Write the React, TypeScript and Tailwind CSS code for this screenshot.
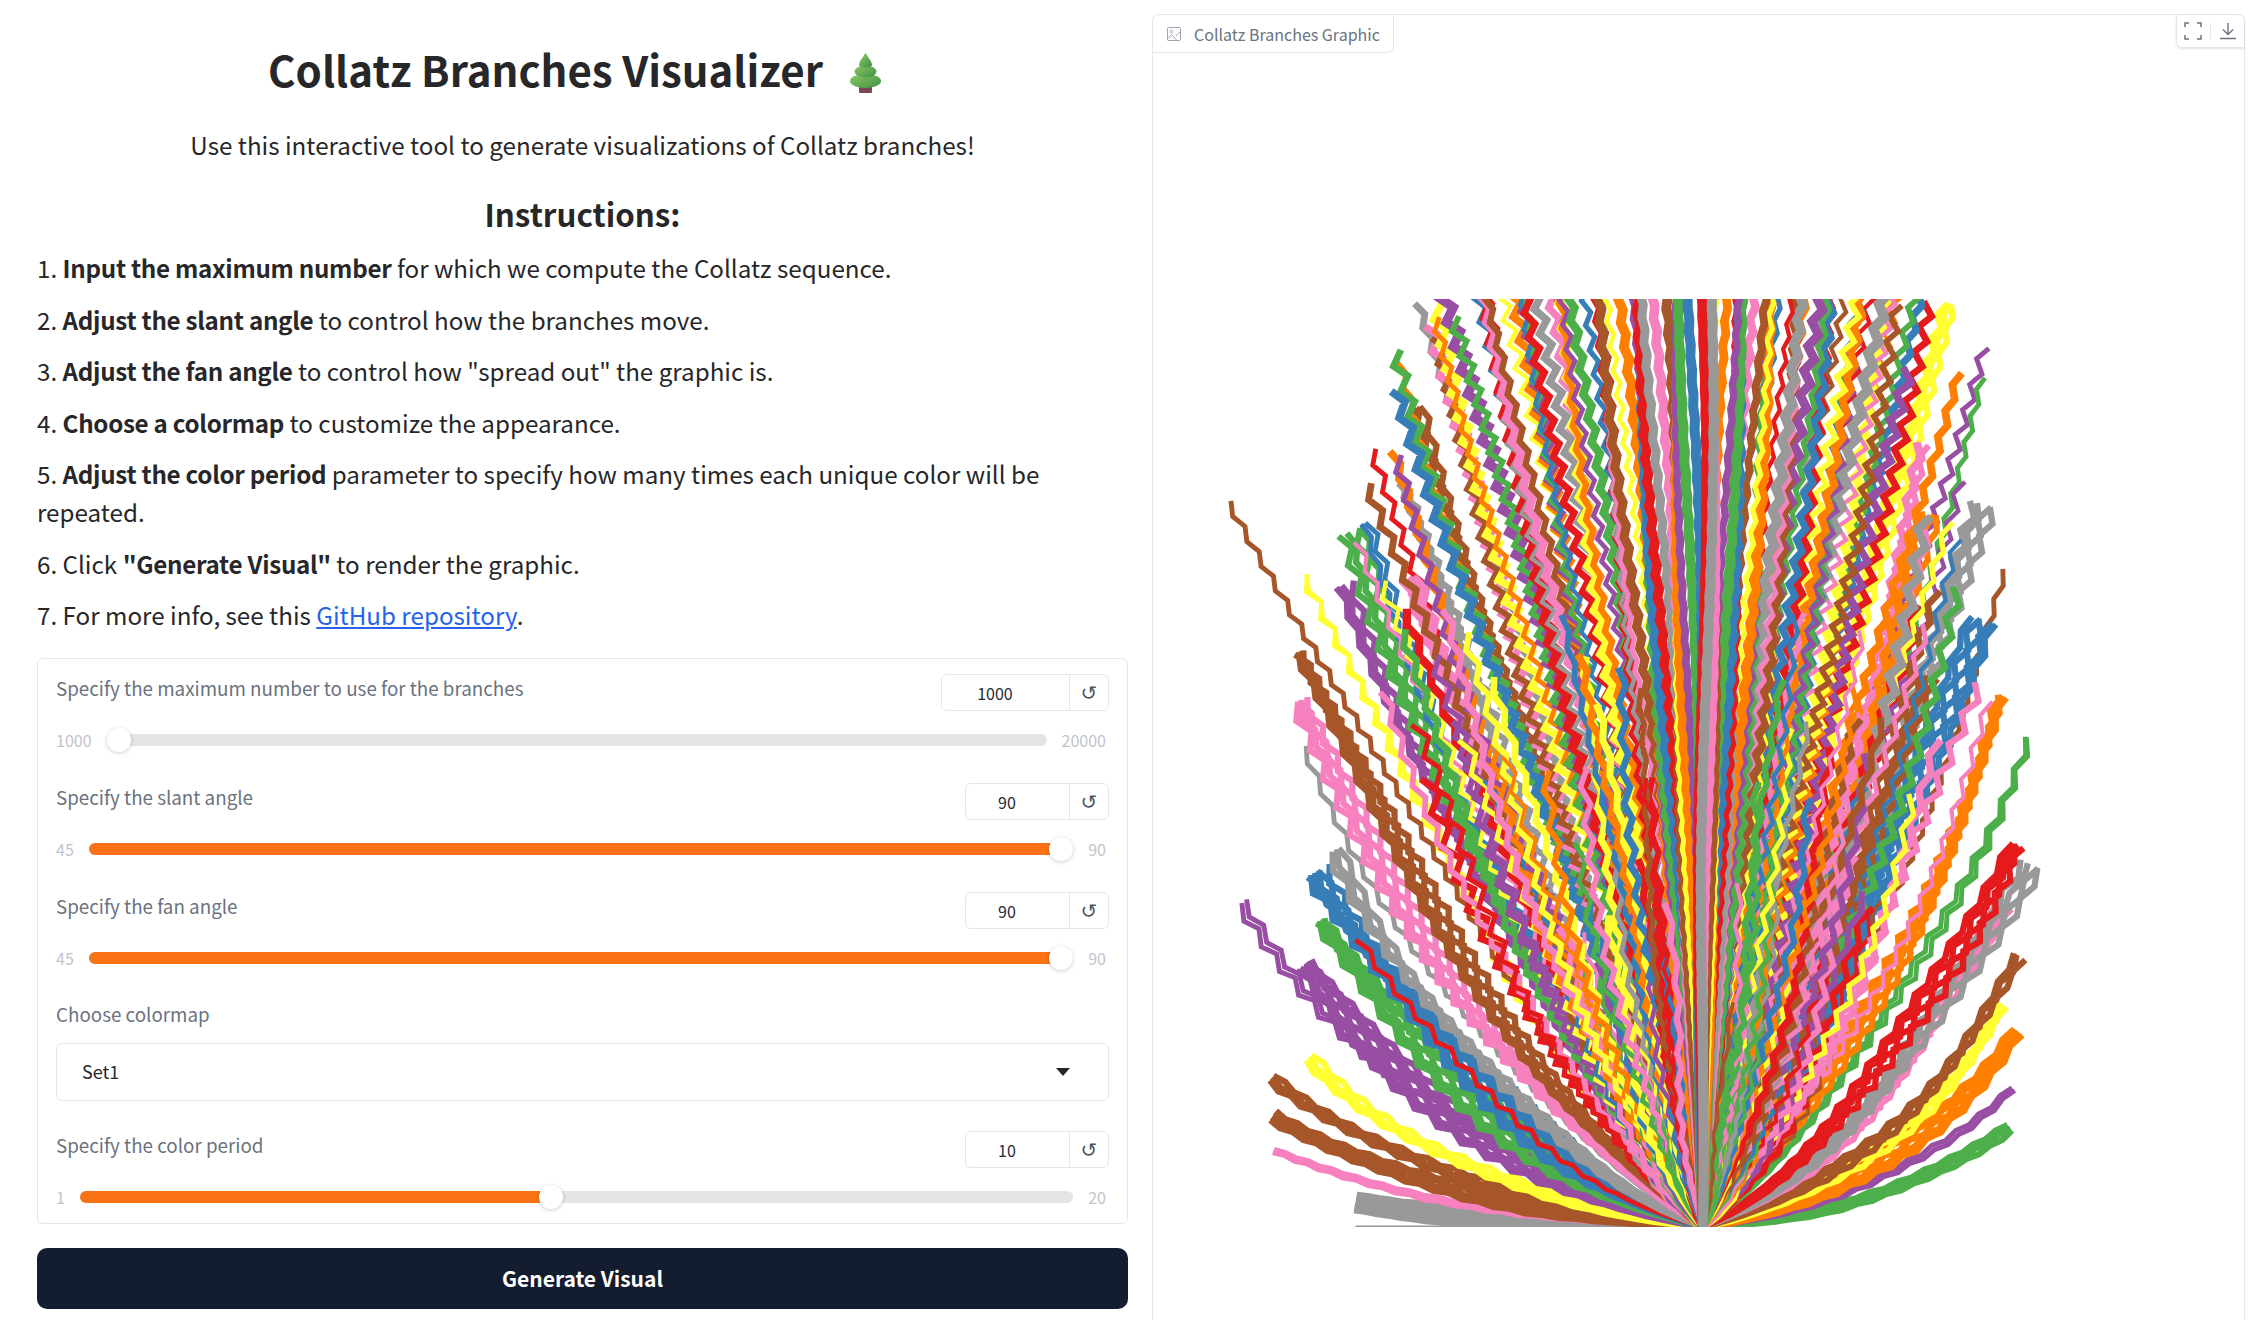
import React, { useMemo } from 'react';

const SET1 = ['#e41a1c', '#377eb8', '#4daf4a', '#984ea3', '#ff7f00', '#ffff33', '#a65628', '#f781bf', '#999999'];
const [RED, BLUE, GREEN, PURPLE, ORANGE, YELLOW, BROWN, PINK, GREY] = SET1;

// Outer branches read off the picture: colour, tip x, tip y, parallel lines
const OUTER: [string, number, number, number][] = [
  [GREY, 942, 853, 1], [GREY, 942, 836, 5], [PINK, 885, 800, 2], [BROWN, 885, 775, 4], [BROWN, 885, 748, 3],
  [YELLOW, 910, 735, 3], [PURPLE, 860, 630, 2], [PURPLE, 905, 672, 6], [GREEN, 918, 640, 6], [BLUE, 917, 605, 7],
  [RED, 948, 650, 1], [GREY, 930, 590, 3], [GREY, 905, 520, 1], [PINK, 898, 490, 4], [BROWN, 900, 455, 4],
  [YELLOW, 907, 400, 2], [BROWN, 858, 347, 1], [PURPLE, 938, 405, 3], [GREEN, 938, 370, 4], [BLUE, 945, 365, 2],
  [RED, 948, 315, 1], [GREY, 975, 335, 3], [PINK, 985, 400, 5], [BROWN, 990, 282, 3], [ORANGE, 975, 250, 1],
  [GREEN, 1397, 783, 3], [PURPLE, 1398, 755, 2], [ORANGE, 1403, 717, 5], [YELLOW, 1395, 700, 3], [BROWN, 1408, 667, 3],
  [PINK, 1395, 630, 3], [GREY, 1410, 600, 4], [RED, 1397, 585, 4], [GREEN, 1408, 512, 2], [ORANGE, 1395, 485, 4],
  [BROWN, 1400, 398, 1], [GREY, 1382, 352, 4], [BLUE, 1375, 430, 5], [YELLOW, 1350, 210, 3], [PURPLE, 1375, 240, 1],
  [GREEN, 1378, 262, 1], [PINK, 1342, 310, 3], [ORANGE, 1345, 358, 4], [BROWN, 1340, 470, 3], [RED, 1330, 420, 2],
];

const rand = (s: number) => {
  const v = Math.sin(s * 127.1 + 311.7) * 43758.5453;
  return v - Math.floor(v);
};

function branch(ex: number, ey: number, seed: number, offset: number, flip: number, ampScale: number) {
  const dx = ex - 1184;
  const h = 853 - ey;
  const reach = Math.min(1, h / 645);
  const cx = 1184 + dx * (0.68 - 0.28 * reach);
  const cy = 853 - h * (0.12 + 0.24 * reach);
  const len = Math.hypot(dx, h);
  const step = 7 + (1 - reach) * 4;
  const n = Math.max(6, Math.round(len / step));
  const low = Math.min(1, reach * 2.5);
  const pts: string[] = [];
  for (let i = 0; i <= n; i++) {
    const t = i / n;
    const u = 1 - t;
    const x = u * u * 1184 + 2 * u * t * cx + t * t * ex;
    const y = u * u * 853 + 2 * u * t * cy + t * t * ey;
    const tx = 2 * u * (cx - 1184) + 2 * t * (ex - cx);
    const ty = 2 * u * (cy - 853) + 2 * t * (ey - cy);
    const tl = Math.hypot(tx, ty) || 1;
    const amp = Math.min(1, Math.max(0, (t - 0.16) * 3)) * (1.8 + rand(seed) * 1.6) * ampScale * low;
    const zig = (i + flip) % 2 ? amp : -amp;
    const drift = Math.sin(t * 7 + seed) * 6 * t * low;
    const side = zig + drift + offset * Math.min(1, t * 3);
    pts.push(`${(x - (ty / tl) * side).toFixed(1)},${(y + (tx / tl) * side).toFixed(1)}`);
  }
  return pts.join(' ');
}

function CollatzChart() {
  const lines = useMemo(() => {
    const out: { color: string; points: string; width: number }[] = [];
    OUTER.forEach(([color, ex, ey, count], k) => {
      for (let j = 0; j < count; j++) {
        const width = ey >= 850 ? 2 : 3.4 + (count > 2 ? 1 : 0);
        out.push({ color, points: branch(ex, ey, k + j * 0.37, (j - (count - 1) / 2) * 2.8, j % 3 === 2 ? 1 : 0, 1), width });
      }
    });
    // inner fan: colours cycle by angle going out from the centre
    const inner: { color: string; points: string; width: number; tip: number }[] = [];
    const count = 52;
    for (let i = count; i >= 0; i--) {
      const left = SET1[i % 9];
      const right = SET1[8 - (i % 9)];
      const u = i / count;
      const w = i < 3 ? 7 : 2.8 + rand(i) * 4.2;
      const amp = Math.min(1.2, 0.1 + u * 1.9);
      const ly = u > 0.86 ? 230 + rand(i + 9) * 200 : 170 + rand(i + 3) * (u > 0.7 ? 90 : 10);
      const lx = 1181 - u * 232;
      inner.push({ color: left, points: branch(lx, ly, i + 40, 0, 0, amp), width: w, tip: u });
      const ry = u > 0.86 ? 230 + rand(i + 19) * 200 : 170 + rand(i + 13) * (u > 0.7 ? 90 : 10);
      const rx = 1187 + u * 180;
      inner.push({ color: right, points: branch(rx, ry, i + 90, 0, 0, amp), width: w, tip: u });
    }
    // shorter branches that end inside the fan and break up the stripes
    for (let i = 0; i < 110; i++) {
      const side = i % 2 ? 1 : -1;
      const u = 0.16 + rand(i + 200) * 0.84;
      const ey = 420 + rand(i + 300) * 350;
      const h = 853 - ey;
      const ex = 1184 + side * u * h * (side < 0 ? 0.62 : 0.56);
      inner.push({
        color: SET1[Math.floor(rand(i + 400) * 9)],
        points: branch(ex, ey, i + 500, 0, i % 2, 0.5 + u),
        width: 2.6 + rand(i + 600) * 2.6,
        tip: u * 0.9,
      });
    }
    inner.sort((a, b) => b.tip - a.tip);
    return [...out, ...inner];
  }, []);

  return (
    <svg viewBox="801 208 760 645" className="block w-full h-[928px]" preserveAspectRatio="none">
      {lines.map((l, i) => (
        <polyline key={i} points={l.points} fill="none" stroke={l.color} strokeWidth={l.width} strokeLinejoin="miter" />
      ))}
    </svg>
  );
}

function TreeIcon() {
  return (
    <svg viewBox="0 0 31 40" className="w-[31px] h-10 ml-[27px] mr-4 mt-[17px]">
      <defs>
        <linearGradient id="leaf" x1="0" y1="0" x2="1" y2="1">
          <stop offset="0" stopColor="#8cc968" />
          <stop offset="1" stopColor="#3f9142" />
        </linearGradient>
      </defs>
      <rect x="9" y="33" width="13" height="7" rx="1" fill="#7b4650" />
      <ellipse cx="15.5" cy="28" rx="15.5" ry="7" fill="url(#leaf)" />
      <ellipse cx="15.5" cy="18.5" rx="11" ry="6" fill="url(#leaf)" />
      <path d="M15.5 0 C18 4 22 9 22 11.5 C22 14 19 14.5 15.5 14.5 C12 14.5 9 14 9 11.5 C9 9 13 4 15.5 0 Z" fill="url(#leaf)" />
    </svg>
  );
}

function NumberBox({ value, width }: { value: string; width: string }) {
  return (
    <div className={`flex h-[37px] rounded-[6px] border border-[#e5e7eb] ${width}`}>
      <div className="flex-1 flex items-center justify-center pr-[21px] text-[16px] text-[#1f2937]">{value}</div>
      <div className="w-[39px] flex items-center justify-center border-l border-[#e5e7eb] text-[20px] text-[#4b5563] font-['DejaVu_Sans',sans-serif]">↺</div>
    </div>
  );
}

function SliderBlock({ label, value, min, max, pct, boxWidth }: { label: string; value: string; min: string; max: string; pct: number; boxWidth: string }) {
  const at = `calc(12px + (100% - 24px) * ${pct / 100})`;
  return (
    <div>
      <div className="flex justify-between h-[37px]">
        <span className="text-[18.8px] leading-[28px] text-[#6b7280]">{label}</span>
        <NumberBox value={value} width={boxWidth} />
      </div>
      <div className="flex items-center gap-[15px] h-6 mt-[17px] pr-[3px] text-[16px] text-[#c0c4cc]">
        <span>{min}</span>
        <div className="relative flex-1 h-3 rounded-full bg-[#e4e4e7]">
          <div className="h-full rounded-full bg-[#f97316]" style={{ width: pct ? at : 0 }} />
          <div className="absolute top-[-6px] w-6 h-6 -ml-3 rounded-full bg-white shadow-[0_1px_4px_rgba(0,0,0,0.2)]" style={{ left: at }} />
        </div>
        <span>{max}</span>
      </div>
    </div>
  );
}

const Bold = ({ children }: { children: React.ReactNode }) => <b className="font-semibold tracking-[-0.012em]">{children}</b>;

const App: React.FC = () => {
  return (
    <div className="w-[2255px] h-[1320px] overflow-hidden bg-white flex font-['Noto_Sans_CJK_SC',sans-serif] text-[#27272a]">
      <div className="w-[1091px] ml-[37px] shrink-0">
        <div className="flex justify-center items-start mt-[36px] h-[66px]">
          <h1 className="text-[42px] leading-[66px] font-semibold">Collatz Branches Visualizer</h1>
          <TreeIcon />
        </div>
        <p className="text-center text-[24.2px] leading-[38px] mt-[24px]">Use this interactive tool to generate visualizations of Collatz branches!</p>
        <h2 className="text-center text-[31.3px] leading-[48px] font-semibold mt-[26px]">Instructions:</h2>
        <div className="text-[24.2px] leading-[38px] mt-[11px] flex flex-col gap-[13.5px]">
          <p>1. <Bold>Input the maximum number</Bold> for which we compute the Collatz sequence.</p>
          <p>2. <Bold>Adjust the slant angle</Bold> to control how the branches move.</p>
          <p>3. <Bold>Adjust the fan angle</Bold> to control how "spread out" the graphic is.</p>
          <p>4. <Bold>Choose a colormap</Bold> to customize the appearance.</p>
          <p>5. <Bold>Adjust the color period</Bold> parameter to specify how many times each unique color will be repeated.</p>
          <p>6. Click <Bold>"Generate Visual"</Bold> to render the graphic.</p>
          <p>7. For more info, see this <a className="text-[#2563eb] underline">GitHub repository</a>.</p>
        </div>

        <div className="mt-[24px] h-[566px] rounded-[6px] border border-[#e5e7eb] px-[18px] pt-[15px] flex flex-col">
          <SliderBlock label="Specify the maximum number to use for the branches" value="1000" min="1000" max="20000" pct={0} boxWidth="w-[168px]" />
          <div className="mt-[31px]">
            <SliderBlock label="Specify the slant angle" value="90" min="45" max="90" pct={100} boxWidth="w-[144px]" />
          </div>
          <div className="mt-[31px]">
            <SliderBlock label="Specify the fan angle" value="90" min="45" max="90" pct={100} boxWidth="w-[144px]" />
          </div>
          <div className="mt-[32px] text-[18.8px] leading-6 text-[#6b7280]">Choose colormap</div>
          <div className="mt-[17px] h-[58px] rounded-[6px] border border-[#e5e7eb] flex items-center justify-between pl-[25px] pr-[38px] text-[18px]">
            <span className="-mt-[2px]">Set1</span>
            <svg viewBox="0 0 14 8" className="w-[14px] h-2"><path d="M0 0h14L7 8z" fill="#27272a" /></svg>
          </div>
          <div className="mt-[30px]">
            <SliderBlock label="Specify the color period" value="10" min="1" max="20" pct={47.4} boxWidth="w-[144px]" />
          </div>
        </div>

        <button className="mt-[24px] w-full h-[61px] rounded-[10px] bg-[#141c2f] text-white text-[21px] font-semibold">Generate Visual</button>
      </div>

      <div className="relative ml-[24px] mt-[14px] w-[1093px] h-[1400px] shrink-0 rounded-[6px] border border-[#e5e7eb] pt-[284px]">
        <div className="absolute left-0 top-0 h-[38px] w-[241px] flex items-center gap-[13px] pl-[14px] rounded-br-[6px] rounded-tl-[6px] border-r border-b border-[#e5e7eb] text-[16px] text-[#6b7280]">
          <svg viewBox="0 0 14 14" className="w-[14px] h-[14px]" fill="none" stroke="#9ca3af" strokeWidth="1">
            <rect x="0.5" y="0.5" width="13" height="13" rx="1" />
            <circle cx="4.5" cy="4.5" r="1.2" />
            <path d="M1 11.5l3.5-4 5.5 6M9 9l4-4" />
          </svg>
          Collatz Branches Graphic
        </div>
        <div className="absolute right-0 top-0 h-[33px] w-[68px] flex items-center justify-center gap-2 rounded-bl-[6px] rounded-tr-[6px] border-l border-b border-[#e5e7eb] shadow-sm">
          <svg viewBox="0 0 18 18" className="w-[18px] h-[18px]" fill="none" stroke="#6b7280" strokeWidth="1.5">
            <path d="M1 5V1h4M13 1h4v4M17 13v4h-4M5 17H1v-4" />
          </svg>
          <span className="w-px h-[16px] bg-[#e5e7eb]" />
          <svg viewBox="0 0 18 18" className="w-[18px] h-[18px]" fill="none" stroke="#6b7280" strokeWidth="1.4">
            <path d="M9 1v11M4 7.5L9 12.5l5-5M1 16.5h16" />
          </svg>
        </div>
        <CollatzChart />
      </div>
    </div>
  );
};

export default App;
